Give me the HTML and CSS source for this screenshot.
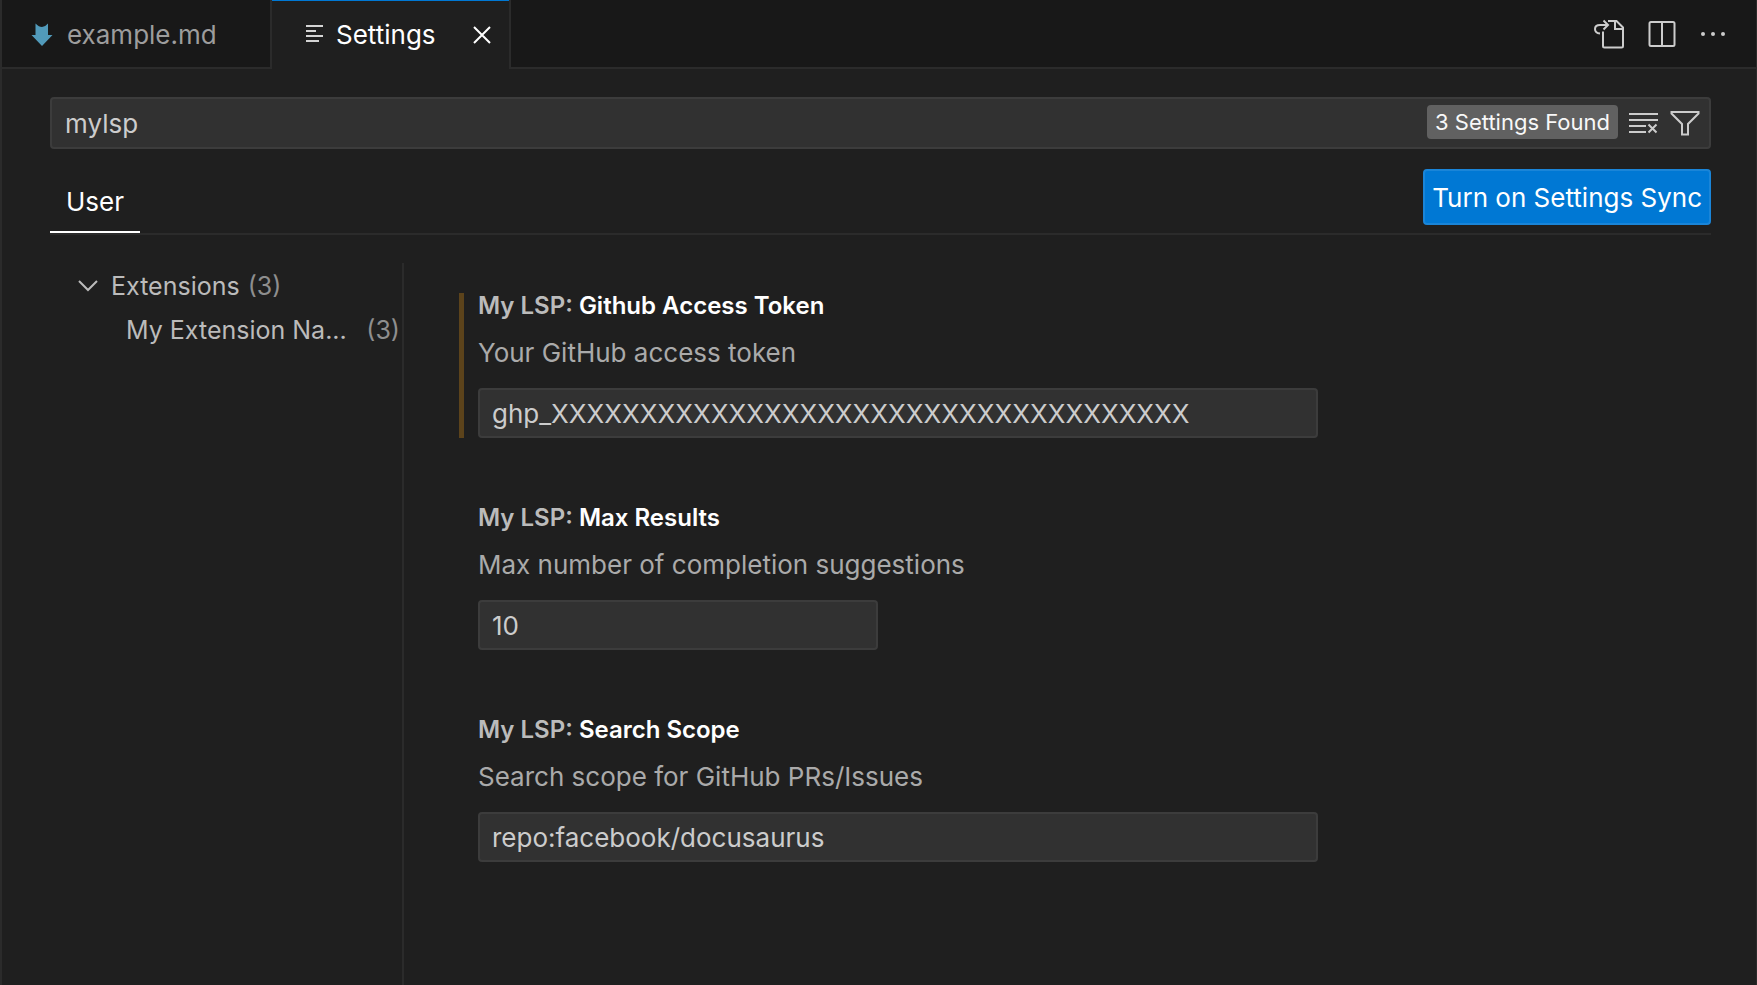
FILE: index.html
```html
<!DOCTYPE html>
<html lang="en">
<head>
<meta charset="utf-8">
<title>Settings</title>
<link rel="stylesheet" href="styles.css">
</head>
<body>
<div class="editor">
  <header class="tabbar">
    <div class="tabs" role="tablist">
      <button class="tab" role="tab" aria-selected="false">
        <svg class="md-icon" width="22" height="24" viewBox="0 0 22 24" aria-hidden="true"><path fill="#519aba" d="M4.500 .5Q8 4 11 4 14 4 17 .5V12H21.500L11 23 .5 12H4.500Z"/></svg>
        <span>example.md</span>
      </button>
      <div class="tab tab-active">
        <button class="tab-name" role="tab" aria-selected="true">
          <svg width="18" height="20" viewBox="0 0 18 20" stroke="#d4d4d4" stroke-width="2" aria-hidden="true"><path d="M0 1H17M0 6H10M0 11H17M0 16H13"/></svg>
          <span>Settings</span>
        </button>
        <button class="icon-button" aria-label="Close">
          <svg width="18" height="18" viewBox="0 0 18 18" stroke="#fff" stroke-width="2" aria-hidden="true"><path d="M1 1 17 17M17 1 1 17"/></svg>
        </button>
      </div>
    </div>
    <div class="actions">
      <button class="icon-button" aria-label="Open Settings (JSON)">
        <svg width="30" height="30" viewBox="0 0 30 30" fill="none" stroke="#ccc" stroke-width="2" aria-hidden="true"><path d="M14 2H22.500L29 8.500V27Q29 28.500 27.500 28.500H10.500Q9 28.500 9 27V12.500M21 2V10H29"/><path d="M6 14.500Q1 14 1 10 1 6 6 6H13M9.500 1.500 14 6 9.500 10.500"/></svg>
      </button>
      <button class="icon-button" aria-label="Split Editor Right">
        <svg width="28" height="28" viewBox="0 0 28 28" fill="none" stroke="#ccc" stroke-width="2" aria-hidden="true"><rect x="1.500" y="2" width="25" height="24" rx="1.500"/><path d="M14 2V26"/></svg>
      </button>
      <button class="icon-button" aria-label="More Actions">
        <svg width="26" height="6" viewBox="0 0 26 6" fill="#ccc" aria-hidden="true"><circle cx="3" cy="3" r="2"/><circle cx="13" cy="3" r="2"/><circle cx="23" cy="3" r="2"/></svg>
      </button>
    </div>
  </header>

  <main class="settings">
    <div class="search">
      <input class="search-input" type="text" aria-label="Search settings" value="mylsp">
      <span class="badge">3 Settings Found</span>
      <button class="icon-button" aria-label="Clear Settings Search Input">
        <svg width="30" height="22" viewBox="0 0 30 22" fill="none" stroke="#ccc" stroke-width="2" aria-hidden="true"><path d="M0 2H29M0 8H29M0 14H17M0 20H17M19.500 12.500 27.500 20.500M27.500 12.500 19.500 20.500"/></svg>
      </button>
      <button class="icon-button" aria-label="Filter Settings">
        <svg width="30" height="26" viewBox="0 0 30 26" fill="none" stroke="#ccc" stroke-width="2" aria-hidden="true"><path d="M1.500 2H28.500V3.500L18 14V24.500H12V14L1.500 3.500Z"/></svg>
      </button>
    </div>

    <div class="scope-row">
      <button class="scope">User</button>
      <button class="sync">Turn on Settings Sync</button>
    </div>

    <div class="body">
      <nav class="tree" aria-label="Settings groups">
        <button class="tree-row">
          <svg width="20" height="12" viewBox="0 0 20 12" fill="none" stroke="#bbb" stroke-width="2" aria-hidden="true"><path d="M1 1 10 10 19 1"/></svg>
          <span class="tree-name">Extensions</span>
          <span class="count">(3)</span>
        </button>
        <button class="tree-row tree-child">
          <span class="tree-name">My Extension Na...</span>
          <span class="count">(3)</span>
        </button>
      </nav>

      <div class="list">
        <section class="item modified">
          <label class="title" for="token"><span class="category">My LSP: </span>Github Access Token</label>
          <p class="description">Your GitHub access token</p>
          <input class="field" id="token" type="text" value="ghp_XXXXXXXXXXXXXXXXXXXXXXXXXXXXXXXXXXXX">
        </section>
        <section class="item">
          <label class="title" for="max"><span class="category">My LSP: </span>Max Results</label>
          <p class="description">Max number of completion suggestions</p>
          <input class="field field-number" id="max" type="text" inputmode="numeric" value="10">
        </section>
        <section class="item">
          <label class="title" for="scope"><span class="category">My LSP: </span>Search Scope</label>
          <p class="description">Search scope for GitHub PRs/Issues</p>
          <input class="field" id="scope" type="text" value="repo:facebook/docusaurus">
        </section>
      </div>
    </div>
  </main>
</div>
</body>
</html>
```
FILE: styles.css
```css
* {
  box-sizing: border-box;
}

body {
  margin: 0;
  background: #1f1f1f;
  color: #ccc;
  font: 26px/32px Inter, "Liberation Sans", sans-serif;
}

button,
input {
  font: inherit;
  color: inherit;
}

button {
  padding: 0;
  border: 0;
  background: none;
  cursor: pointer;
}

svg {
  display: block;
  flex: none;
}

.editor {
  display: flex;
  flex-direction: column;
  min-height: 100vh;
  border-left: 2px solid #2b2b2b;
  border-right: 1px solid #2b2b2b;
}

/* Tab bar */
.tabbar {
  display: flex;
  justify-content: space-between;
  height: 69px;
  background: linear-gradient(#2b2b2b, #2b2b2b) bottom / 100% 2px no-repeat #181818;
}

.tabs {
  display: flex;
}

.tab {
  display: flex;
  align-items: center;
  width: 270px;
  padding-left: 29px;
  border-right: 2px solid #2b2b2b;
  color: #9d9d9d;
}

.md-icon {
  margin-right: 14px;
}

.tab-active {
  justify-content: space-between;
  width: 239px;
  padding: 0 18px 0 34px;
  background: #1f1f1f;
  box-shadow: inset 0 1px #0078d4;
  color: #fff;
}

.tab-name {
  display: flex;
  align-items: center;
  gap: 12px;
}

.icon-button {
  display: grid;
  place-items: center;
}

.actions {
  display: flex;
  align-items: center;
  gap: 24px;
  padding: 0 30px 2px 0;
}

/* Search */
.settings {
  display: flex;
  flex: 1;
  flex-direction: column;
  padding: 28px 45px 0 48px;
}

.search {
  display: flex;
  align-items: center;
  gap: 11px;
  height: 52px;
  padding-right: 9px;
  border: 2px solid #3c3c3c;
  border-radius: 4px;
  background: #313131;
}

.search-input {
  flex: 1;
  min-width: 0;
  padding: 2px 13px 0;
  border: 0;
  outline: 0;
  background: none;
}

.badge {
  padding: 0 8px;
  margin-bottom: 2px;
  border-radius: 4px;
  background: #616161;
  color: #f8f8f8;
  font-size: 22px;
  line-height: 34px;
}

/* Scope tabs */
.scope-row {
  display: flex;
  align-items: flex-end;
  justify-content: space-between;
  height: 86px;
  border-bottom: 2px solid #2b2b2b;
}

.scope {
  height: 64px;
  padding: 4px 16px 0;
  border-bottom: 2px solid #fff;
  color: #fff;
}

.sync {
  height: 56px;
  padding: 2px 7px 0;
  margin-bottom: 8px;
  border: 2px solid #1a85d8;
  border-radius: 4px;
  background: #0078d4;
  color: #fff;
}

/* Groups and settings */
.body {
  display: flex;
  flex: 1;
  padding-top: 28px;
}

.tree {
  flex: none;
  width: 354px;
  border-right: 2px solid #2b2b2b;
  color: #bbb;
  font-size: 25px;
}

.tree-row {
  display: flex;
  align-items: center;
  gap: 8px;
  width: 100%;
  height: 44px;
  padding: 2px 0 0 28px;
}

.tree-row svg {
  margin-right: 5px;
}

.tree-child {
  justify-content: space-between;
  padding: 2px 2px 0 76px;
}

.tree-name {
  white-space: nowrap;
}

.count {
  color: #8e8e8e;
}

.list {
  display: flex;
  flex: 1;
  flex-direction: column;
  gap: 67px;
  max-width: 914px;
  padding: 30px 0 64px 55px;
}

.item {
  display: flex;
  flex-direction: column;
  padding-left: 14px;
  border-left: 5px solid transparent;
}

.modified {
  border-left-color: #5c431b;
}

.title {
  color: #fff;
  font-size: 24px;
  font-weight: 600;
  line-height: 26px;
}

.category {
  color: #bbb;
}

.description {
  margin: 18px 0 19px;
  color: #aaa;
}

.field {
  width: 100%;
  height: 50px;
  padding: 0 12px;
  border: 2px solid #3c3c3c;
  border-radius: 4px;
  outline: 0;
  background: #313131;
}

.field-number {
  width: 400px;
}
```
